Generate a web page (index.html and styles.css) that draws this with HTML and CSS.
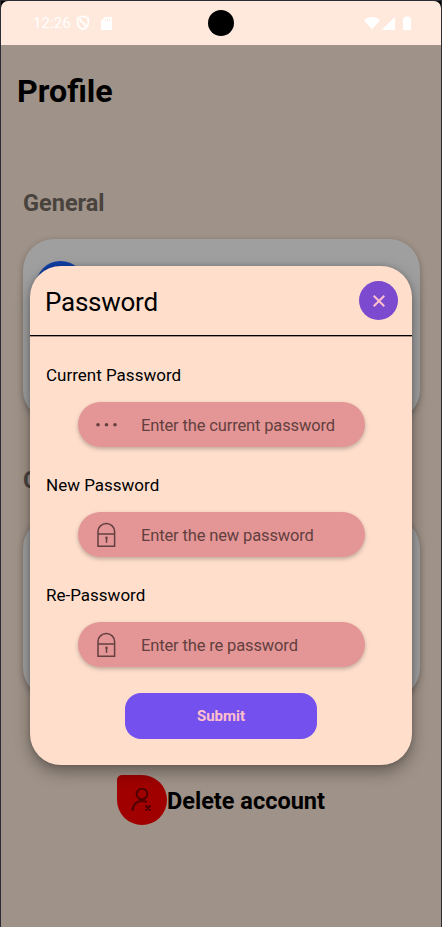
FILE: index.html
```html
<!DOCTYPE html>
<html lang="en">
<head>
<meta charset="utf-8">
<title>Profile</title>
<link rel="stylesheet" href="styles.css">
</head>
<body>
<div class="phone">
  <header class="status">
    <span class="clock">12:26</span>
    <svg class="shield" width="14" height="16" viewBox="0 0 14 16" fill="none" stroke="#fff" stroke-width="1.7"><path d="M7 1.200 12.300 3v5c0 3-2.300 5.200-5.300 6.500C4 13.200 1.700 11 1.700 8V3Z"/><path d="M4 3.500c-.5 4.500 6.500 3.500 5 8.500"/></svg>
    <svg class="sd" width="11" height="13" viewBox="0 0 11 13"><path fill="#fff" d="M4 0h7v13H0V4Z"/><path stroke="#ffe9dc" stroke-width=".8" d="M4.500 1.500v2.500M6.500 1.500v2.500M8.500 1.500v2.500"/></svg>
    <span class="camera"></span>
    <svg class="signals" width="48" height="15" viewBox="0 0 48 15" fill="#fff"><path d="M0 4.200C4.500-.2 11.500-.2 16 4.200L8 13.500Z"/><path d="M31 1v13H17.500ZM39 2.500q0-1 1-1h1V.5h4v1h1q1 0 1 1V14h-8Z"/></svg>
  </header>
  <main class="page">
    <h1>Profile</h1>
    <h2>General</h2>
    <section class="card"><span class="avatar"></span></section>
    <h2 class="second">C</h2>
    <section class="card"></section>
    <div class="delete">
      <span class="drop"><svg width="24" height="26" viewBox="0 0 24 26" fill="none" stroke="#500000" stroke-width="2"><circle cx="12" cy="7" r="5.300"/><path d="M2.500 24c0-6 4-10 9.500-10 2 0 3.500.4 4.800 1.200M15.500 18.500l5 5m0-5-5 5"/></svg></span>
      <strong>Delete account</strong>
    </div>
  </main>
  <div class="dialog">
    <div class="dialog-head">
      <span class="title">Password</span>
      <button class="close"><svg width="12" height="12" viewBox="0 0 12 12" stroke="#ffc0cb" stroke-width="2"><path d="m.7.700 10.600 10.600m0-10.600L.7 11.300"/></svg></button>
    </div>
    <div class="dialog-body">
      <label>Current Password</label>
      <div class="field"><svg width="22" height="26" viewBox="0 0 22 26" fill="#643f40"><circle cx="3" cy="12.700" r="1.800"/><circle cx="11.500" cy="12.700" r="1.800"/><circle cx="20" cy="12.700" r="1.800"/></svg><span>Enter the current password</span></div>
      <label>New Password</label>
      <div class="field"><svg width="22" height="26" viewBox="0 0 22 26" fill="none" stroke="#643f40" stroke-width="1.500"><path d="M3 24.200V9.500a8.300 7.900 0 0 1 16.600 0V24.200ZM3 12h16.600"/><path stroke-width="1.500" d="M11.500 16v4.800"/><circle cx="11.500" cy="15.800" r="1.200" fill="#643f40" stroke="none"/></svg><span>Enter the new password</span></div>
      <label>Re-Password</label>
      <div class="field"><svg width="22" height="26" viewBox="0 0 22 26" fill="none" stroke="#643f40" stroke-width="1.500"><path d="M3 24.200V9.500a8.300 7.900 0 0 1 16.600 0V24.200ZM3 12h16.600"/><path stroke-width="1.500" d="M11.500 16v4.800"/><circle cx="11.500" cy="15.800" r="1.200" fill="#643f40" stroke="none"/></svg><span>Enter the re password</span></div>
      <button class="submit">Submit</button>
    </div>
  </div>
</div>
</body>
</html>
```
FILE: styles.css
```css
* { box-sizing: border-box; }
body { margin: 0; background: #000; font-family: Roboto, sans-serif; color: #000; }
button { border: 0; padding: 0; font-family: inherit; }
svg { display: block; flex: none; }
.phone { position: relative; width: 442px; height: 927px; border: 1px solid #2c2c34; border-bottom: 0; overflow: hidden; }
.status { position: relative; height: 44px; padding: 0 29px 0 32px; display: flex; align-items: center; background: #ffe9dc; border-radius: 7px 7px 0 0; color: #fff; }
.clock { width: 43px; font-size: 15px; letter-spacing: .1px; }
.sd { margin-left: 11px; }
.signals { margin-left: auto; }
.camera { position: absolute; left: 207px; top: 9px; width: 26px; height: 26px; border-radius: 50%; background: #000; }
.page { height: 882px; padding: 26px 21px 0 22px; background: #9f9288; }
h1 { margin: 0 0 0 -6px; font-size: 32.2px; line-height: 40px; font-weight: 700; }
h2 { margin: 78px 0 22px; font-size: 23.5px; line-height: 28px; font-weight: 700; color: #49433e; }
h2.second { margin: 45px 0 23px; }
.card { height: 182px; padding: 22px 13px; border-radius: 31px; background: #9f9f9f; box-shadow: 0 2px 6px rgba(0,0,0,.3); }
.avatar { display: block; width: 49px; height: 49px; border-radius: 50%; background: #103fa5; }
.delete { display: flex; align-items: center; margin: 76px 0 0 94px; }
.drop { display: grid; place-items: center; width: 50px; height: 50px; border-radius: 5px 25px 25px 25px; background: #a00000; }
.delete strong { padding-top: 1px; font-size: 23.5px; line-height: 28px; }
.dialog { position: absolute; left: 29px; top: 265px; width: 382px; height: 499px; border-radius: 31px; background: #ffdfcc; box-shadow: 0 7px 16px rgba(0,0,0,.35), 0 0 5px rgba(0,0,0,.18); }
.dialog-head { height: 70px; padding: 0 14px 0 15px; display: flex; align-items: center; justify-content: space-between; border-bottom: 1px solid #000; box-shadow: 0 1px rgba(0,0,0,.35); }
.title { padding-top: 2px; font-size: 26px; letter-spacing: -.25px; }
.close { display: grid; place-items: center; width: 39px; height: 39px; border-radius: 50%; background: #7c4acf; }
.dialog-body { padding: 27px 47px 0 48px; display: flex; flex-direction: column; }
label { margin-left: -32px; height: 24px; font-size: 17px; line-height: 24px; }
.field { display: flex; align-items: center; height: 45px; margin: 15px 0 26px; padding-left: 17px; border-radius: 23px; background: #e39695; color: #643f40; font-size: 16.5px; letter-spacing: -.14px; box-shadow: 0 2px 4px rgba(0,0,0,.25); }
.field span { margin-left: 24px; padding-top: 1px; }
.submit { align-self: center; width: 192px; height: 46px; margin-right: 1px; border-radius: 16px; background: #7450ef; color: #ffc0cb; font-size: 15px; font-weight: 700; }
```
